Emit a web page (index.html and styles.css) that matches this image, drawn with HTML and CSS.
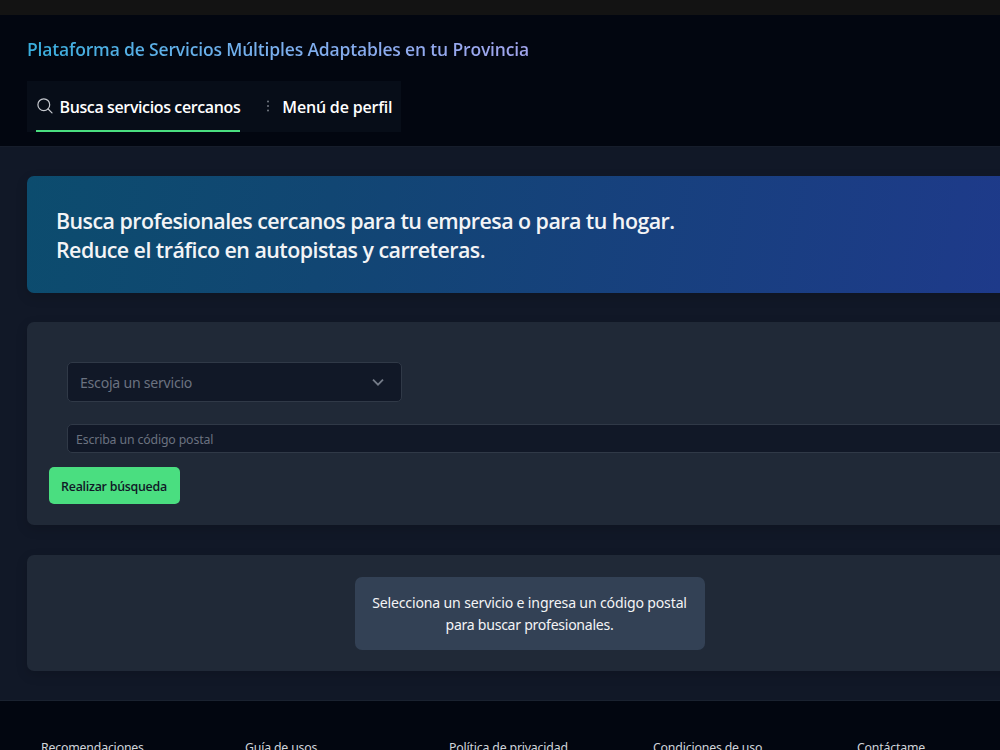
FILE: index.html
```
<!DOCTYPE html>
<html lang="es">
<head>
<meta charset="utf-8">
<title>Plataforma de Servicios</title>
<link rel="stylesheet" href="styles.css">
</head>
<body>
<div class="page">
  <div class="topbar"></div>
  <header class="header">
    <h1 class="title"><span class="title-text">Plataforma de Servicios Múltiples Adaptables en tu Provincia</span></h1>
    <nav class="nav">
      <a class="tab tab-active">
        <svg class="search-icon" width="16" height="16" viewBox="0 0 16 16" fill="none" stroke="#c5c8ce" stroke-width="1.2" stroke-linecap="round"><circle cx="6.8" cy="6.7" r="5.9"/><path d="M11.1 11 15 14.9"/></svg>
        <span class="tab-label search-label">Busca servicios cercanos</span>
      </a>
      <a class="tab">
        <svg class="dots-icon" width="4" height="12" viewBox="0 0 4 12" fill="#747982"><circle cx="2" cy="1.4" r="1"/><circle cx="2" cy="6" r="1"/><circle cx="2" cy="10.6" r="1"/></svg>
        <span class="tab-label menu-label">Menú de perfil</span>
      </a>
    </nav>
  </header>
  <main class="main">
    <section class="banner">
      <p class="banner-line line-one">Busca profesionales cercanos para tu empresa o para tu hogar.</p>
      <p class="banner-line line-two">Reduce el tráfico en autopistas y carreteras.</p>
    </section>
    <section class="panel form">
      <div class="select"><span class="select-text">Escoja un servicio</span>
        <svg width="12" height="8" viewBox="0 0 12 8" fill="none" stroke="#747b88" stroke-width="1.8"><path d="M1 1.7 6 6.7 11 1.7"/></svg>
      </div>
      <div class="input"><span class="input-text">Escriba un código postal</span></div>
      <button class="button"><span class="button-text">Realizar búsqueda</span></button>
    </section>
    <section class="panel results">
      <div class="notice">
        <span class="notice-one">Selecciona un servicio e ingresa un código postal</span>
        <span class="notice-two">para buscar profesionales.</span>
      </div>
    </section>
  </main>
  <footer class="footer">
    <a class="link">Recomendaciones</a>
    <a class="link">Guía de usos</a>
    <a class="link">Política de privacidad</a>
    <a class="link">Condiciones de uso</a>
    <a class="link">Contáctame</a>
  </footer>
</div>
</body>
</html>
```
FILE: styles.css
```
* { box-sizing: border-box; }
html, body { margin: 0; height: 750px; overflow: hidden; background: #02060f; }
body { font-family: "Noto Sans", "Open Sans", sans-serif; color: #f3f4f6; }
.page { width: 1059px; height: 750px; overflow: hidden; white-space: nowrap; }
.topbar { height: 15px; background: #131313; }
.header { height: 132px; padding: 21px 27px 0; background: #020610; border-bottom: 1px solid #161d2b; }
.title { margin: 0; font-family: "Open Sans", "Noto Sans", sans-serif; font-size: 17.5px; line-height: 26px; font-weight: 600; letter-spacing: -.165px; }
.title-text { display: inline-block; background: linear-gradient(90deg, #38aedd, #76b0ee 45%, #a2a5ee); background-clip: text; -webkit-background-clip: text; color: transparent; }
.nav { display: flex; gap: 23.5px; width: 374px; height: 51px; margin-top: 19px; padding: 0 9px; background: #070d18; font-family: "Open Sans", "Noto Sans", sans-serif; }
.tab { display: flex; align-items: center; height: 51px; padding-top: 1px; border-bottom: 2px solid transparent; font-size: 16px; font-weight: 600; letter-spacing: -.38px; color: #fff; }
.tab-active { width: 204.5px; border-bottom-color: #4ade80; }
.tab-label { padding-top: 2px; }
.menu-label { letter-spacing: -.18px; }
.search-icon { margin: 0 6.5px 0 1px; flex: none; }
.dots-icon { margin: 0 12.5px 0 2px; flex: none; }
.main { height: 554px; padding: 29px 27px; display: flex; flex-direction: column; gap: 29.5px; background: #111827; border-bottom: 1px solid #1a2230; }
.banner { height: 116.5px; padding: 30px 29px; border-radius: 7px; background: linear-gradient(100deg, #0c4c6e, #114673 30%, #1e3a8a 97%); box-shadow: 0 4px 12px rgba(0,0,0,.15); }
.banner-line { margin: 0; font-family: "Open Sans", "Noto Sans", sans-serif; font-size: 21.4px; line-height: 29px; font-weight: 600; letter-spacing: -.54px; }
.panel { border-radius: 7px; background: #202937; box-shadow: 0 4px 12px rgba(0,0,0,.15); }
.form { height: 203.5px; padding: 40px 22px 0; }
.select { display: flex; align-items: center; justify-content: space-between; width: 334.5px; height: 40px; margin-left: 18px; padding: 0 17px 0 12px; border: 1px solid #303947; border-radius: 5px; background: #111827; font-size: 14.1px; color: #6b7280; letter-spacing: -.24px; }
.input { display: flex; align-items: center; height: 29px; margin: 22px 0 0 18px; padding: 1px 8px 0; border: 1px solid #303947; border-radius: 5px; background: #111827; font-size: 12.3px; color: #6b7280; letter-spacing: -.14px; }
.button { display: flex; align-items: center; justify-content: center; width: 131px; height: 37px; margin: 14px 0 0 -.5px; padding: 1px 0 0; border: 0; border-radius: 5px; background: #4ade80; font: 600 12.4px "Open Sans", "Noto Sans", sans-serif; letter-spacing: -.25px; color: #111827; }
.results { display: flex; justify-content: center; height: 116.5px; padding-top: 22px; }
.notice { display: flex; flex-direction: column; align-items: center; width: 350px; height: 73px; padding-top: 15px; border-radius: 7px; background: #334155; font-size: 14.1px; line-height: 22px; letter-spacing: -.165px; }
.notice-two { letter-spacing: -.28px; }
.footer { display: grid; grid-template-columns: repeat(5, 204px); padding: 38px 41px 0; height: 60px; background: #020610; font-size: 12.3px; line-height: 18px; color: #d1d5db; letter-spacing: -.17px; }
.link { display: block; }
```
